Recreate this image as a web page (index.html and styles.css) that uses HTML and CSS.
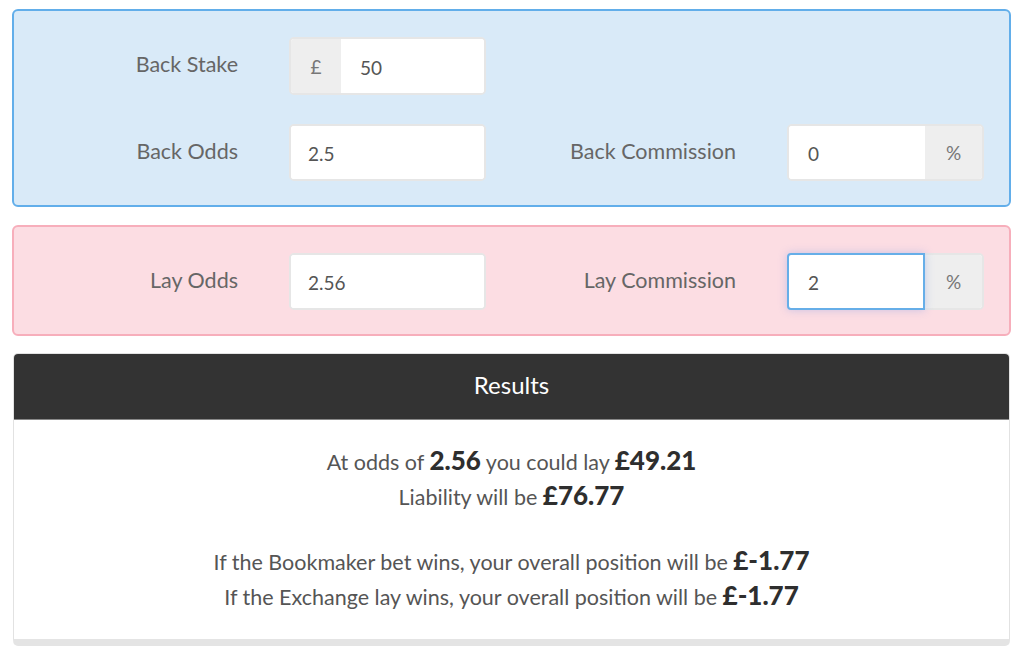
FILE: index.html
```html
<!DOCTYPE html>
<html>
<head>
<meta charset="utf-8">
<link rel="stylesheet" href="styles.css">
</head>
<body>
<div class="page">
  <section class="panel panel-back">
    <div class="grid">
      <label class="lbl">Back Stake</label>
      <div class="group tall"><span class="addon">£</span><span class="field">50</span></div>
      <div></div><div></div>
      <label class="lbl">Back Odds</label>
      <div class="group"><span class="field solo">2.5</span></div>
      <label class="lbl">Back Commission</label>
      <div class="group"><span class="field">0</span><span class="addon addon-r">%</span></div>
    </div>
  </section>
  <section class="panel panel-lay">
    <div class="grid">
      <label class="lbl">Lay Odds</label>
      <div class="group"><span class="field solo">2.56</span></div>
      <label class="lbl">Lay Commission</label>
      <div class="group"><span class="field focus">2</span><span class="addon addon-r">%</span></div>
    </div>
  </section>
  <section class="results">
    <h2 class="results-head">Results</h2>
    <div class="results-body">
      <p>At odds of <b>2.56</b> you could lay <b>£49.21</b><br>Liability will be <b>£76.77</b></p>
      <p>If the Bookmaker bet wins, your overall position will be <b>£-1.77</b><br>If the Exchange lay wins, your overall position will be <b>£-1.77</b></p>
    </div>
  </section>
</div>
</body>
</html>
```
FILE: styles.css
```css
* { box-sizing: border-box; }
html, body { margin: 0; padding: 0; background: #fff; }
body { font-family: Lato, "Open Sans", sans-serif; color: #555; }
.page { padding: 9px 13px 0 12px; display: flex; flex-direction: column; width: 1024px; }
.panel { border: 2px solid #62aeea; border-radius: 6px; background: #d9eaf8; padding: 26px 0 24px 0; }
.panel-lay { background: #fcdde3; border-color: #f7aebb; margin-top: 18px; }
.grid { display: grid; grid-template-columns: 224px 197px 199px 197px; column-gap: 51px; row-gap: 29px; align-items: center; }
.lbl { text-align: right; font-size: 21.5px; color: #666; padding-bottom: 4px; }
.group { display: flex; height: 57px; border: 2px solid #e6e6e6; border-radius: 5px; background: #fff; }
.group.tall { height: 58px; }
.field { flex: 1; display: flex; align-items: center; padding-left: 19px; padding-top: 2px; font-size: 19px; color: #555; background: #fff; border-radius: 3px; }
.field.solo { padding-left: 17px; }
.field.focus { border: 2px solid #66aee8; margin: -2px 0 -2px -2px; padding-left: 19px; box-shadow: 0 0 8px rgba(140,160,230,.45); border-radius: 4px 0 0 4px; position: relative; }
.addon { width: 50px; display: flex; align-items: center; justify-content: center; background: #eee; color: #777; font-size: 19px; border-radius: 3px 0 0 3px; }
.addon-r { width: 57px; border-radius: 0 3px 3px 0; }
.results { margin: 17px 1px 0 1px; border-radius: 5px; overflow: hidden; border: 1px solid #e2e2e2; border-bottom: 7px solid #e4e4e4; }
.results-head { margin: 0; height: 66px; background: #333; color: #fff; font-weight: normal; font-size: 24px; text-align: center; line-height: 62px; border-bottom: 1px solid #888; }
.results-body { background: #fff; text-align: center; padding: 25px 0 25px; font-size: 21.5px; line-height: 34.5px; color: #555; }
.results-body p { margin: 0 0 31px; }
.results-body p:last-child { margin-bottom: 0; }
.results-body b { color: #2e2e2e; font-size: 26px; font-weight: 900; line-height: 0; }
```
